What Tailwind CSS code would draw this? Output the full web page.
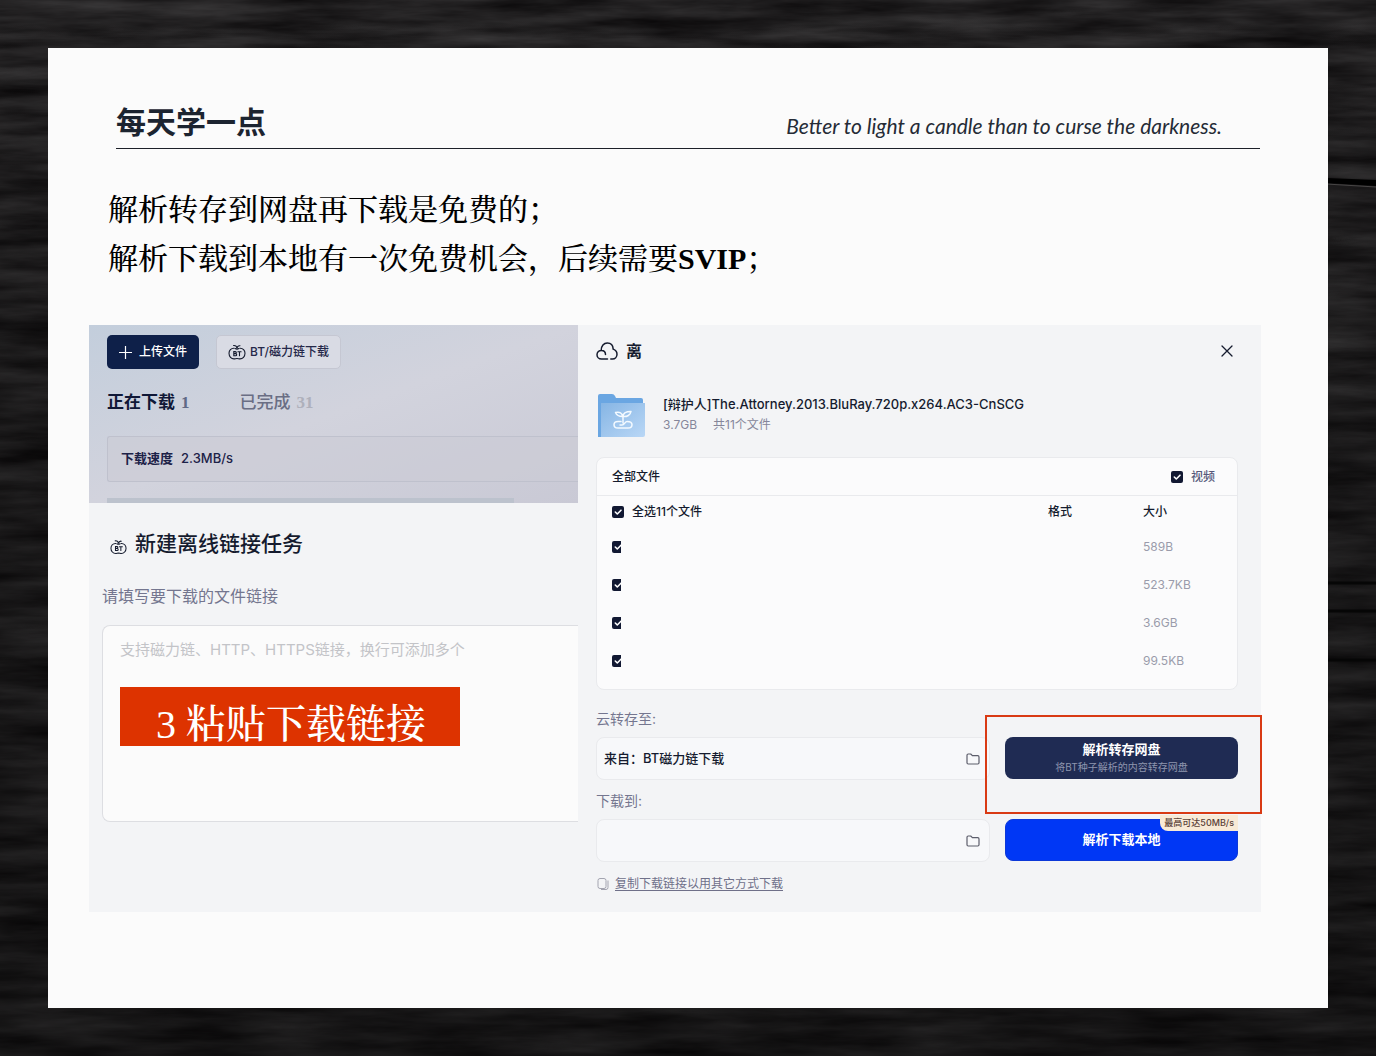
<!DOCTYPE html>
<html lang="zh-CN">
<head>
<meta charset="utf-8">
<meta name="viewport" content="width=device-width, initial-scale=1">
<title>每天学一点</title>
<script src="https://cdn.jsdelivr.net/npm/@tailwindcss/browser@4"></script>
</head>
<body class="relative min-h-screen bg-[#1b1a1b] p-12 font-['Inter','Noto_Sans_CJK_SC',sans-serif] text-[#151b2e]">
<!-- dark wood grain -->
<svg class="absolute inset-0 h-full w-full" aria-hidden="true">
  <defs>
    <filter id="grain" x="0" y="0" width="100%" height="100%" color-interpolation-filters="sRGB">
      <feTurbulence type="fractalNoise" baseFrequency="0.008 0.06" numOctaves="5" seed="8"/>
      <feColorMatrix values="0.24 0 0 0 0.012  0.24 0 0 0 0.006  0.24 0 0 0 0.01  0 0 0 0 1"/>
    </filter>
    <linearGradient id="shade" x1="0" y1="0" x2="0" y2="1"><stop stop-color="#000" stop-opacity="0"/><stop offset=".4" stop-color="#000" stop-opacity=".25"/><stop offset="1" stop-color="#000" stop-opacity=".4"/></linearGradient>
  </defs>
  <rect width="100%" height="100%" filter="url(#grain)"/>
  <rect width="100%" height="100%" fill="url(#shade)"/>
  <svg x="100%" overflow="visible"><path d="M-50 178L0 180V186L-50 183Z" fill="#000"/><path d="M-50 184L0 187" stroke="#484646"/><path d="M-50 583H0M-50 611H0M-50 660H0" stroke="#060606" stroke-width="3"/></svg>
</svg>
<svg class="hidden" aria-hidden="true">
  <symbol id="bt" viewBox="0 0 18 16" fill="none" stroke="currentColor" stroke-width="1.1" stroke-linecap="round">
    <path d="M6.200 4.200C3 4 1 6.500 1 9.300C1 12.500 3.300 14.900 6 14.900c1.200 0 1.800-.4 3-.4s1.800.4 3 .4c2.700 0 5-2.400 5-5.600C17 6.500 15 4 11.800 4.200"/>
    <path d="M5.500 1.500C7.500 1.300 8.700 2.200 9 4.200C9.300 2.600 10.300 1.600 12 1.800M7.200 4.600C8.300 5.200 9.700 5.200 10.800 4.600"/>
    <path d="M5.800 7.600h1.500a1 1 0 0 1 0 2h-1.500zM5.800 9.600h1.800a1.100 1.100 0 0 1 0 2.200h-1.800zM9.900 7.700h3.200M11.500 7.700v4.100"/>
  </symbol>
  <symbol id="tick" viewBox="0 0 12 12" fill="none" stroke="#fff" stroke-width="1.600" stroke-linecap="round" stroke-linejoin="round"><path d="M3.300 6l2 2 3.700-3.800"/></symbol>
  <symbol id="dir" viewBox="0 0 14 12" fill="none" stroke="currentColor" stroke-width="1.200" stroke-linejoin="round"><path d="M1 2.200C1 1.400 1.500 1 2.200 1H4.700L6.400 2.700H11.800C12.600 2.700 13 3.200 13 3.900V9.800C13 10.600 12.600 11 11.800 11H2.200C1.400 11 1 10.600 1 9.800Z"/></symbol>
</svg>

<main class="relative min-h-[calc(100vh-96px)] bg-[#fbfbfb] pb-[95px]">
  <header class="mx-[68px] flex items-end justify-between border-b border-[#1c2028] pt-[52px] pr-[38px] pb-1">
    <h1 class="text-[30px] leading-[44px] font-bold text-[#1c2430]">每天学一点</h1>
    <p class="font-['Lato',sans-serif] text-[21px] leading-9 text-[#252b36] italic">Better to light a candle than to curse the darkness.</p>
  </header>

  <p class="mt-9 ml-[60px] font-['Liberation_Serif','Noto_Serif_CJK_SC','Noto_Sans_CJK_SC',serif] text-[30px] leading-[49px] font-medium text-black">解析转存到网盘再下载是免费的；<br>解析下载到本地有一次免费机会，后续需要<span class="font-semibold">SVIP</span>；</p>

  <div class="mt-[42px] mr-[67px] ml-[41px] grid grid-cols-[489fr_683fr] bg-[#f3f4f6]">
    <!-- transfer list and the new-task form -->
    <section class="min-w-0">
      <div class="h-[178px] overflow-hidden bg-linear-to-br from-[#c3cedc] via-[#d2d3dd] to-[#c9c9d5] pt-[10px] pl-[18px]">
        <div class="flex gap-[17px]">
          <button class="flex h-[34px] items-center gap-[7px] rounded-[5px] bg-[#0e2049] px-3 text-[12px] font-medium whitespace-nowrap text-white">
            <svg class="h-[13px] w-[13px]" viewBox="0 0 13 13" stroke="currentColor" stroke-width="1.200"><path d="M6.500 0v13M0 6.500h13"/></svg>上传文件</button>
          <button class="flex h-[34px] items-center gap-1 rounded-[5px] border border-[#c5c7d2] bg-[#d9dbe4] px-[11px] text-[12px] font-medium whitespace-nowrap text-[#252849]">
            <svg class="h-4 w-[18px] text-[#151b2e]"><use href="#bt"/></svg>BT/磁力链下载</button>
        </div>
        <nav class="mt-[21px] flex gap-[50px] text-[17px] leading-6">
          <a href="#active" class="font-bold text-[#101837]">正在下载<span class="ml-[6px] font-['Liberation_Serif',serif] text-[#606985]">1</span></a>
          <a href="#done" class="font-medium text-[#6a6e84]">已完成<span class="ml-[6px] font-['Liberation_Serif',serif] font-bold text-[#aeb0bb]">31</span></a>
        </nav>
        <div class="mt-[21px] flex h-[46px] items-center gap-2 rounded-l-[3px] border border-r-0 border-[#bfc1cd] bg-[#cbcbd6]/60 pl-[13px] text-[13px] font-medium text-[#1d2248]"><b>下载速度</b><span>2.3MB/s</span></div>
        <div class="mt-4 mr-16 h-[5px] bg-[#bcc2cd]"></div>
      </div>

      <form class="pt-[26px] pl-[13px]">
        <h2 class="ml-2 flex items-center gap-2 text-[21px] leading-[30px] font-medium">
          <svg class="mt-[6px] h-4 w-[17px]"><use href="#bt"/></svg>新建离线链接任务</h2>
        <label for="links" class="mt-[25px] block text-[16px] leading-6 text-[#74768f]">请填写要下载的文件链接</label>
        <div class="relative mt-[17px]">
          <textarea id="links" class="block h-[197px] w-full resize-none rounded-l-lg border border-r-0 border-[#dddee2] bg-[#fbfbfb] px-[17px] py-3 text-[15px] leading-6 placeholder:text-[#c3c4c8]" placeholder="支持磁力链、HTTP、HTTPS链接，换行可添加多个"></textarea>
          <p class="absolute top-[62px] left-[18px] h-[59px] w-[340px] bg-[#dd3300] pt-[11px] pl-9 font-['Liberation_Serif','Noto_Serif_CJK_SC','Noto_Sans_CJK_SC',serif] text-[40px] leading-[54px] font-medium whitespace-nowrap text-white">3 粘贴下载链接</p>
        </div>
      </form>
    </section>

    <!-- offline download dialog -->
    <section class="min-w-0 pt-[14px] pr-[23px] pb-[18px] pl-[18px]">
      <div class="flex h-6 items-center">
        <svg class="h-[18px] w-[22px]" viewBox="0 0 22 18" fill="none" stroke="currentColor" stroke-width="1.500" stroke-linecap="round"><path d="M11.500 17H5.500C2.800 17 1 15 1 12.700C1 10.200 3 8.400 5.400 8.400C8.200 8.400 9.500 10.200 9.500 12.500M5.200 8.300C5.200 3.900 7.800 1 11.300 1C14.700 1 17 3.500 17.200 7.100C19.600 7.900 21 9.900 21 12.200C21 15 19 17 16.500 17H14.800"/></svg>
        <h2 class="ml-2 text-[16px] leading-6 font-bold">离</h2>
        <button class="mr-[5px] ml-auto" aria-label="关闭"><svg class="h-3 w-3" viewBox="0 0 12 12" stroke="currentColor" stroke-width="1.300" stroke-linecap="round"><path d="M1 1l10 10M11 1L1 11"/></svg></button>
      </div>

      <div class="mt-[31px] ml-[2px] flex gap-[18px]">
        <svg class="h-[43px] w-[47px]" viewBox="0 0 47 43" fill="none">
          <defs><linearGradient id="fold" x1="0" y1="0" x2="1" y2="1"><stop stop-color="#86b5e4"/><stop offset="1" stop-color="#b9d7f6"/></linearGradient></defs>
          <path d="M0 2Q0 0 2 0H14Q16 0 17 2L18 4H43Q45 4 45 6V43H0Z" fill="#6aa6e2"/>
          <path d="M3 9H47V41Q47 43 45 43H3Z" fill="url(#fold)"/>
          <path d="M25 29V23M25 22.500C25 19.500 28 17.500 33 17.500C32.500 21 29 23 25 22.500ZM24.500 22.500C20.500 22.500 18.500 21 17.500 18.500C21.500 17.500 24.500 19 24.500 22.500ZM23 27.500H20C17.500 27.500 16 29 16 30.700C16 32.500 17.500 34 20 34H30C33 34 34 32.500 34 30.700C34 29 32.500 27.500 29 27.500C27 27.500 26.500 31 24 31H22" stroke="#f4faff" stroke-width="1.500" stroke-linecap="round" stroke-linejoin="round"/>
        </svg>
        <div class="min-w-0">
          <h3 class="text-[13px] leading-5 font-medium whitespace-nowrap">[辩护人]The.Attorney.2013.BluRay.720p.x264.AC3-CnSCG</h3>
          <p class="flex gap-4 text-[12px] leading-[22px] text-[#85869a]"><span>3.7GB</span><span>共11个文件</span></p>
        </div>
      </div>

      <div class="mt-5 rounded-lg border border-[#e9eaed] bg-[#fbfbfc] pb-[9px] text-[12px]">
        <div class="flex h-[38px] items-center justify-between border-b border-[#e9eaed] pr-[22px] pl-[15px]">
          <h3 class="font-medium">全部文件</h3>
          <label class="flex items-center gap-2 font-medium text-[#55587a]"><span class="grid"><input type="checkbox" checked class="col-start-1 row-start-1 h-3 w-3 appearance-none rounded-[2px] bg-[#111832]"><svg class="pointer-events-none col-start-1 row-start-1 h-3 w-3"><use href="#tick"/></svg></span>视频</label>
        </div>
        <table class="w-full table-fixed text-left">
          <thead><tr class="h-8">
            <th class="pl-[15px] font-medium"><label class="flex items-center gap-2"><span class="grid"><input type="checkbox" checked class="col-start-1 row-start-1 h-3 w-3 appearance-none rounded-[2px] bg-[#111832]"><svg class="pointer-events-none col-start-1 row-start-1 h-3 w-3"><use href="#tick"/></svg></span>全选11个文件</label></th>
            <th class="w-[95px] font-medium">格式</th><th class="w-[94px] font-medium">大小</th>
          </tr></thead>
          <tbody class="text-[#9a9bab]">
            <tr class="h-[38px]"><td class="pl-[15px]"><span class="grid h-3 w-[9px] overflow-hidden"><input type="checkbox" checked aria-label="文件 1" class="col-start-1 row-start-1 h-3 w-3 appearance-none rounded-[2px] bg-[#111832]"><svg class="pointer-events-none col-start-1 row-start-1 h-3 w-3"><use href="#tick"/></svg></span></td><td></td><td>589B</td></tr>
            <tr class="h-[38px]"><td class="pl-[15px]"><span class="grid h-3 w-[9px] overflow-hidden"><input type="checkbox" checked aria-label="文件 2" class="col-start-1 row-start-1 h-3 w-3 appearance-none rounded-[2px] bg-[#111832]"><svg class="pointer-events-none col-start-1 row-start-1 h-3 w-3"><use href="#tick"/></svg></span></td><td></td><td>523.7KB</td></tr>
            <tr class="h-[38px]"><td class="pl-[15px]"><span class="grid h-3 w-[9px] overflow-hidden"><input type="checkbox" checked aria-label="文件 3" class="col-start-1 row-start-1 h-3 w-3 appearance-none rounded-[2px] bg-[#111832]"><svg class="pointer-events-none col-start-1 row-start-1 h-3 w-3"><use href="#tick"/></svg></span></td><td></td><td>3.6GB</td></tr>
            <tr class="h-[38px]"><td class="pl-[15px]"><span class="grid h-3 w-[9px] overflow-hidden"><input type="checkbox" checked aria-label="文件 4" class="col-start-1 row-start-1 h-3 w-3 appearance-none rounded-[2px] bg-[#111832]"><svg class="pointer-events-none col-start-1 row-start-1 h-3 w-3"><use href="#tick"/></svg></span></td><td></td><td>99.5KB</td></tr>
          </tbody>
        </table>
      </div>

      <div class="mt-[18px] grid grid-cols-[394fr_233fr] gap-x-[15px]">
        <div>
          <label for="cloud" class="block text-[14px] leading-[22px] text-[#74768f]">云转存至:</label>
          <div class="mt-[7px] flex h-[43px] items-center rounded-lg border border-[#e9eaed] bg-[#f7f8fa] pr-[9px] pl-[7px]">
            <input id="cloud" class="min-w-0 flex-1 text-[13px] font-medium" value="来自：BT磁力链下载">
            <button type="button" aria-label="选择网盘目录" class="text-[#5c5e6b]"><svg class="h-3 w-[14px]"><use href="#dir"/></svg></button>
          </div>
        </div>
        <div class="relative pt-[29px]">
          <button class="flex h-[42px] w-full flex-col items-center justify-center rounded-lg bg-[#1f2b53] text-white"><span class="text-[13px] leading-[18px] font-bold">解析转存网盘</span><span class="text-[10px] leading-[18px] text-[#8e95ae]">将BT种子解析的内容转存网盘</span></button>
          <div class="pointer-events-none absolute top-[7px] -right-6 -left-5 z-10 h-[99px] border-2 border-[#d93a14]"></div>
        </div>
        <div>
          <label for="local" class="mt-[10px] block text-[14px] leading-[22px] text-[#74768f]">下载到:</label>
          <div class="mt-[7px] flex h-[43px] items-center rounded-lg border border-[#e9eaed] bg-[#f7f8fa] pr-[9px] pl-[7px]">
            <input id="local" class="min-w-0 flex-1 text-[13px]">
            <button type="button" aria-label="选择本地目录" class="text-[#5c5e6b]"><svg class="h-3 w-[14px]"><use href="#dir"/></svg></button>
          </div>
        </div>
        <div class="pt-[39px]">
          <button class="relative h-[42px] w-full rounded-lg border border-[#0c38d8] bg-[#0037f5] text-[13px] font-bold text-white">解析下载本地<span class="absolute -top-[5px] -right-px rounded-bl-lg bg-[#f8ead6] px-1 text-[9px] leading-4 font-medium whitespace-nowrap text-[#5b4238]">最高可达50MB/s</span></button>
        </div>
      </div>

      <a href="#copy" class="mt-3 flex items-center gap-[6px] text-[12px] leading-5 text-[#6f7089]">
        <svg class="ml-[1px] h-3 w-3" viewBox="0 0 12 12" fill="none" stroke="#a3a4b0"><rect x="1" y=".5" width="8" height="10" rx="2"/><path d="M11 2.500V9.500Q11 11.500 9 11.500H4"/></svg><span class="underline underline-offset-2">复制下载链接以用其它方式下载</span></a>
    </section>
  </div>
</main>
</body>
</html>
